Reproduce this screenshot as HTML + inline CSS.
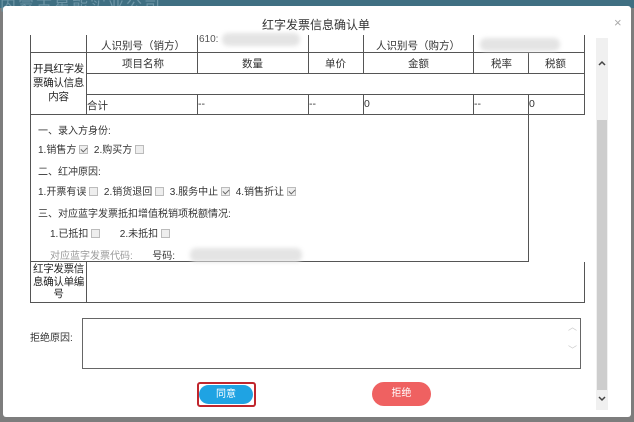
<!DOCTYPE html><html><head><meta charset="utf-8"><style>
*{margin:0;padding:0;box-sizing:border-box}
body{width:634px;height:422px;overflow:hidden;background:#7d7d7d;font-family:"Liberation Sans","Noto Sans CJK SC",sans-serif;font-size:10.5px;color:#333;position:relative}
.a{position:absolute}
.top{left:0;top:0;width:634px;height:8px;background:#3f6f82}
.dlg{left:3px;top:6px;width:628px;height:411px;background:#fff;border-radius:3px;overflow:hidden}
.h{background:#555}
.v{background:#555}
.t{white-space:nowrap}
.s{font-size:10px}
.cb{display:inline-block;width:9px;height:9px;border:1px solid #bbb;background:#eee;vertical-align:-1px;margin-left:3px;position:relative}
.cb.c:after{content:"";position:absolute;left:2px;top:0px;width:3px;height:5px;border:solid #666;border-width:0 1.5px 1.5px 0;transform:rotate(45deg)}
.blur{background:#e4e4e4;border-radius:6px;filter:blur(2px)}
.lbl{text-align:center;line-height:14px;color:#222;font-size:10.5px;letter-spacing:-0.3px}
</style></head><body>
<div class="a top"></div>
<div class="a t" style="left:0;top:-9px;color:#6d95a6;font-size:16px;letter-spacing:2px">内蒙古星能实业公司</div>
<div class="a dlg"></div>
<div class="a t" style="left:262px;top:16px;font-size:12px;color:#333">红字发票信息确认单</div>
<div class="a t" style="left:614px;top:15px;color:#aaa;font-size:13px">×</div>
<div class="a v" style="left:30px;top:35px;width:1px;height:268px"></div>
<div class="a v" style="left:584px;top:35px;width:1px;height:80px"></div>
<div class="a v" style="left:584px;top:262px;width:1px;height:41px"></div>
<div class="a v" style="left:86px;top:35px;width:1px;height:80px"></div>
<div class="a v" style="left:86px;top:262px;width:1px;height:41px"></div>
<div class="a v" style="left:197px;top:35px;width:1px;height:38px"></div>
<div class="a v" style="left:197px;top:94px;width:1px;height:21px"></div>
<div class="a v" style="left:308px;top:35px;width:1px;height:38px"></div>
<div class="a v" style="left:308px;top:94px;width:1px;height:21px"></div>
<div class="a v" style="left:363px;top:35px;width:1px;height:38px"></div>
<div class="a v" style="left:363px;top:94px;width:1px;height:21px"></div>
<div class="a v" style="left:473px;top:35px;width:1px;height:38px"></div>
<div class="a v" style="left:473px;top:94px;width:1px;height:21px"></div>
<div class="a v" style="left:528px;top:52px;width:1px;height:21px"></div>
<div class="a v" style="left:528px;top:94px;width:1px;height:168px"></div>
<div class="a h" style="left:30px;top:52px;width:555px;height:1px"></div>
<div class="a h" style="left:86px;top:73px;width:499px;height:1px"></div>
<div class="a h" style="left:86px;top:94px;width:499px;height:1px"></div>
<div class="a h" style="left:30px;top:114px;width:555px;height:1px"></div>
<div class="a h" style="left:30px;top:261px;width:498px;height:1px"></div>
<div class="a h" style="left:30px;top:302px;width:555px;height:1px"></div>
<div class="a t" style="left:101px;top:38px">人识别号（销方）</div>
<div class="a t" style="left:376px;top:38px">人识别号（购方）</div>
<div class="a t" style="left:199px;top:34px;font-size:10px;color:#555">610:</div>
<div class="a blur" style="left:222px;top:33px;width:78px;height:13px"></div>
<div class="a blur" style="left:480px;top:38px;width:80px;height:13px"></div>
<div class="a t" style="left:122px;top:56px">项目名称</div>
<div class="a t" style="left:242px;top:56px">数量</div>
<div class="a t" style="left:325px;top:56px">单价</div>
<div class="a t" style="left:408px;top:56px">金额</div>
<div class="a t" style="left:491px;top:56px">税率</div>
<div class="a t" style="left:545px;top:56px">税额</div>
<div class="a lbl" style="left:31px;top:62px;width:55px">开具红字发<br>票确认信息<br>内容</div>
<div class="a t" style="left:87px;top:98px">合计</div>
<div class="a t" style="left:198px;top:98px">--</div>
<div class="a t" style="left:309px;top:98px">--</div>
<div class="a t" style="left:364px;top:98px">0</div>
<div class="a t" style="left:474px;top:98px">--</div>
<div class="a t" style="left:529px;top:98px">0</div>
<div class="a t s" style="left:38px;top:122px">一、录入方身份:</div>
<div class="a t s" style="left:38px;top:141px">1.销售方<span class="cb c"></span>&nbsp; 2.购买方<span class="cb"></span></div>
<div class="a t s" style="left:38px;top:163px">二、红冲原因:</div>
<div class="a t s" style="left:38px;top:183px">1.开票有误<span class="cb"></span>&nbsp; 2.销货退回<span class="cb"></span>&nbsp; 3.服务中止<span class="cb c"></span>&nbsp; 4.销售折让<span class="cb c"></span></div>
<div class="a t s" style="left:38px;top:205px">三、对应蓝字发票抵扣增值税销项税额情况:</div>
<div class="a t s" style="left:50px;top:225px">1.已抵扣<span class="cb"></span>&nbsp;&nbsp;&nbsp;&nbsp;&nbsp;&nbsp; 2.未抵扣<span class="cb"></span></div>
<div class="a t s" style="left:50px;top:247px;color:#999">对应蓝字发票代码:&nbsp;&nbsp;&nbsp;&nbsp;&nbsp;&nbsp; <span style="color:#333">号码:</span></div>
<div class="a blur" style="left:190px;top:248px;width:112px;height:14px"></div>
<div class="a lbl" style="left:31px;top:263px;width:55px;line-height:12.5px">红字发票信<br>息确认单编<br>号</div>
<div class="a t s" style="left:30px;top:329px">拒绝原因:</div>
<div class="a" style="left:82px;top:318px;width:499px;height:51px;border:1px solid #666"></div>
<div class="a t" style="left:568px;top:320px;color:#ccc;font-size:9px">︿</div>
<div class="a t" style="left:568px;top:343px;color:#ccc;font-size:9px">﹀</div>
<div class="a" style="left:197px;top:382px;width:59px;height:25px;border:2px solid #c0262d;border-radius:3px;background:#fff"></div>
<div class="a" style="left:199px;top:385px;width:54px;height:19px;background:#1fa3e3;border-radius:10px;color:#fff;text-align:center;line-height:19px;font-size:10px">同意</div>
<div class="a" style="left:372px;top:382px;width:59px;height:24px;background:#ef6161;border-radius:12px;color:#fff;text-align:center;line-height:24px;font-size:10px">拒绝</div>
<div class="a" style="left:596px;top:38px;width:12px;height:372px;background:#f0f0f0"></div>
<div class="a" style="left:597px;top:120px;width:10px;height:270px;background:#cdcdcd"></div>
<svg class="a" style="left:597px;top:59px" width="10" height="8"><path d="M2 6 L5 3 L8 6" stroke="#444" stroke-width="1.5" fill="none"/></svg>
<svg class="a" style="left:597px;top:395px" width="10" height="8"><path d="M2 2 L5 5 L8 2" stroke="#444" stroke-width="1.5" fill="none"/></svg>
</body></html>
